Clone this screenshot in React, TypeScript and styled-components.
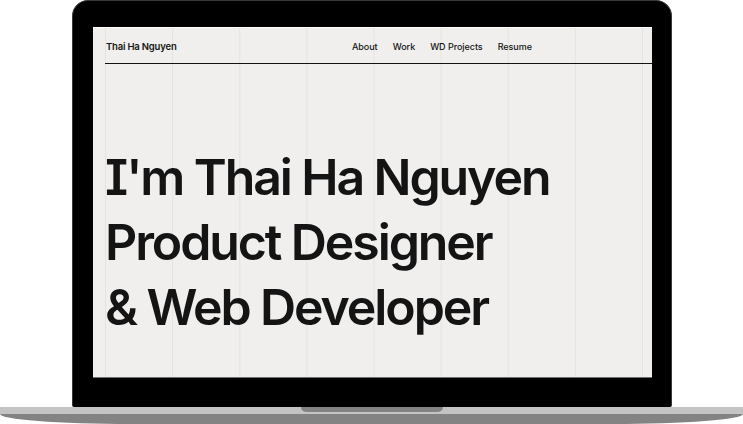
import React from "react";
import styled, { createGlobalStyle } from "styled-components";

const Global = createGlobalStyle`
  html, body { margin: 0; padding: 0; background: #ffffff; }
  body { font-family: Inter, "Noto Sans", sans-serif; }
`;

const Stage = styled.div`
  width: 743px;
  height: 424px;
  display: flex;
  flex-direction: column;
  overflow: hidden;
`;

const Lid = styled.div`
  margin-left: 72px;
  width: 600px;
  height: 407px;
  box-sizing: border-box;
  background: #000;
  border: 1px solid #3a3a3a;
  border-bottom: none;
  border-radius: 16px 16px 2px 2px;
  padding: 26px 19px 29px 20px;
  display: flex;
`;

const Screen = styled.div`
  flex: 1;
  background-color: #f0efed;
  background-image: linear-gradient(to right, #e4e3e0 1px, transparent 1px);
  background-size: 67.125px 100%;
  background-position: 12px 0;
  border-top: 1px solid #ffffff;
  border-bottom: 1px solid #6e6e6e;
  padding: 0 0 0 12px;
  display: flex;
  flex-direction: column;
`;

const Header = styled.header`
  display: grid;
  grid-template-columns: 247px auto;
  align-items: center;
  height: 36px;
  box-sizing: border-box;
  border-bottom: 1px solid #121212;
  color: #151515;
`;

const Logo = styled.div`
  font-size: 9.5px;
  font-weight: 600;
  letter-spacing: -0.02em;
  padding-left: 1px;
  padding-top: 2px;
`;

const Nav = styled.nav`
  display: flex;
  gap: 15px;
  padding-top: 2px;
`;

const NavLink = styled.span`
  font-size: 9px;
  font-weight: 500;
  letter-spacing: -0.005em;
  color: #151515;
`;

const Hero = styled.h1`
  margin: 81px 0 0 0;
  font-size: 50px;
  line-height: 65px;
  font-weight: 600;
  letter-spacing: -0.042em;
  color: #141414;
  font-feature-settings: "cv08" 1;
`;

const Base = styled.div`
  height: 17px;
  display: flex;
  flex-direction: column;
  position: relative;
`;

const BaseTop = styled.div`
  height: 7px;
  background: #c4c4c4;
`;

const BaseBottom = styled.div`
  flex: 1;
  background: #838383;
  border-radius: 0 0 130px 130px / 0 0 10px 10px;
`;

const Notch = styled.div`
  position: absolute;
  top: 0;
  left: 301px;
  width: 142px;
  height: 5px;
  background: #838383;
  border-radius: 0 0 5px 5px;
`;

export default function App() {
  return (
    <>
      <Global />
      <Stage>
        <Lid>
          <Screen>
            <Header>
              <Logo>Thai Ha Nguyen</Logo>
              <Nav>
                <NavLink>About</NavLink>
                <NavLink>Work</NavLink>
                <NavLink>WD Projects</NavLink>
                <NavLink>Resume</NavLink>
              </Nav>
            </Header>
            <Hero>
              I'm Thai Ha Nguyen
              <br />
              Product Designer
              <br />& Web Developer
            </Hero>
          </Screen>
        </Lid>
        <Base>
          <BaseTop />
          <BaseBottom />
          <Notch />
        </Base>
      </Stage>
    </>
  );
}
